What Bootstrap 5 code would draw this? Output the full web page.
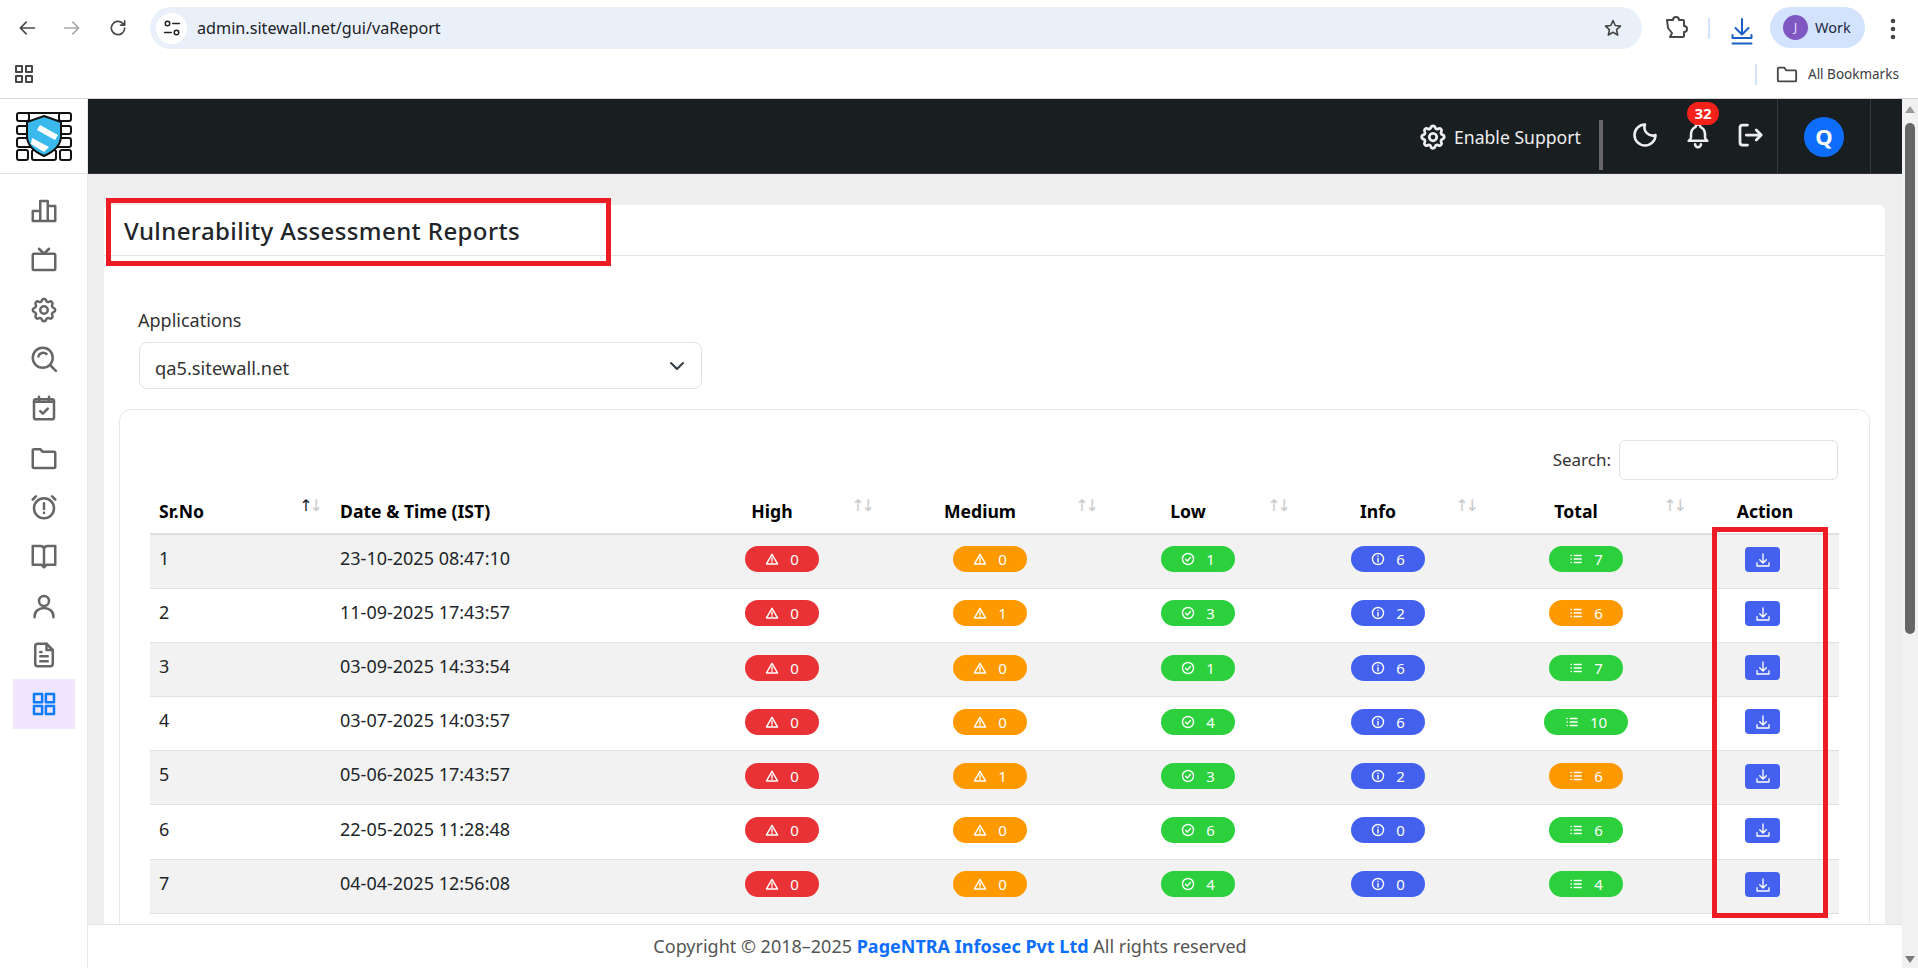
<!DOCTYPE html>
<html lang="en">
<head>
<meta charset="utf-8">
<title>Vulnerability Assessment Reports</title>
<link href="https://cdn.jsdelivr.net/npm/bootstrap@5.3.0/dist/css/bootstrap.min.css" rel="stylesheet">
<script src="https://cdn.jsdelivr.net/npm/bootstrap@5.3.0/dist/js/bootstrap.bundle.min.js"></script>
<style>
html,body{height:968px;overflow:hidden}
body{font-family:"Noto Sans","Open Sans",sans-serif;font-size:15px;color:#212529;background:#fff;position:relative}
.ico{fill:none;stroke:currentColor;stroke-width:2;stroke-linecap:round;stroke-linejoin:round;flex:none}
.addr{position:absolute;left:150px;top:7px;width:1492px;height:42px;border-radius:21px;background:#eaf0fa;display:flex;align-items:center}
.bar-ico{position:absolute;color:#474747}
.tune{width:31px;height:31px;border-radius:50%;background:#fff;margin-left:6px;display:flex;align-items:center;justify-content:center;color:#222}
.url{font-family:"Noto Sans",sans-serif;font-size:16.2px;color:#202124;margin-left:10px;padding-top:1px}
.chrome{height:99px;border-bottom:1px solid #d4d4d4;position:relative;background:#fff}
.sepv{position:absolute;width:2px;background:#d3e3fd}
.work{position:absolute;left:1770px;top:7px;width:95px;height:41px;border-radius:21px;background:#d3e3fd;display:flex;align-items:center;font-size:14.5px;color:#1b2a41}
.work i{width:25px;height:25px;margin-left:13px;margin-right:7px;border-radius:50%;background:#7e57c2;color:#e8def8;font-style:normal;font-size:13px;display:flex;align-items:center;justify-content:center}
.allb{position:absolute;left:1808px;top:64px;font-size:13.5px;color:#3c4043;line-height:20px}
.app{height:869px}
.side{width:88px;flex:none;background:#fff;border-right:1px solid #e9e9e9}
.logo-box{height:75px;border-bottom:1px solid #dfe1e3;padding:13px 0 0 16px}
.nav-ico{width:62px;height:49.3px;margin-left:13px;color:#666;display:flex;align-items:center;justify-content:center}
.nav-ico.on{background:#efe6fd;color:#0d7bff}
.side-list{padding-top:12.500px}
.topnav{height:75px;background:#191e21;flex:none;color:#eee;border-bottom:1px solid #30353a;position:relative}
.topnav .ico{stroke-width:2.2}
.sup{position:absolute;left:1330px;top:23px;display:flex;align-items:center;gap:6px;font-size:17.6px;line-height:30px}
.tbar{position:absolute;left:1511px;top:21px;width:4px;height:50px;background:#666}
.tvl{position:absolute;top:0;bottom:0;width:1px;background:#363b40}
.tnico{position:absolute;color:#eee}
.notif{position:absolute;left:1599px;top:3px;min-width:32px;height:23px;border-radius:12px;background:#f5221b;color:#fff;font-size:15px;font-weight:700;display:flex;align-items:center;justify-content:center}
.ava{position:absolute;left:1716px;top:18px;width:40px;height:40px;border-radius:50%;background:#0d6efd;color:#fff;font-weight:700;font-size:22px;line-height:38px;padding-bottom:2px;display:flex;align-items:center;justify-content:center}
.mainbg{background:#eee;flex:1 1 0;min-height:0;overflow:hidden;padding:31px 17px 0 16px}
.outer{border:0;border-radius:10px 10px 0 0;background:#fff}
.outer>.card-header{height:51px;background:#fff;border-bottom:1px solid #e3e3e3;padding:2px 20px 0;display:flex;align-items:center;font-size:24px;letter-spacing:.4px;font-weight:500;color:#212529}
.outer>.card-body{padding:15px 15px 0}
.lbl{margin:0 0 10px 19px;font-size:18px;line-height:24px;color:#333;padding-top:37px}
.sel{width:563px;margin-left:20px;height:47px;border-radius:8px;font-size:18.3px;padding:8px 36px 4px 15px;color:#333;border-color:#e2e2e6;background-position:right 14px center;background-size:20px 16px}
.inner{margin-top:20px;border:1px solid #e8e8ec;border-radius:12px;background:#fff;padding:30px 31px 60px 30px;--bs-card-border-color:#e8e8ec}
.srch{height:40px;margin-bottom:0;font-size:17px;color:#333}
.srch input{width:219px;height:40px;border-radius:6px;border-color:#e2e2e6;margin-left:8px}
.rep{table-layout:fixed;width:1689px;margin:14px 0 0;font-size:18px;color:#212529;--bs-table-striped-bg:#f2f2f2;--bs-table-border-color:#dfe0e6}
.rep th{height:40px;padding:0 9px 11px;font-size:17.600px;font-weight:700;color:#000;position:relative;border-bottom:2px solid #dfe0e6;vertical-align:bottom;line-height:22px}
.rep th.ctr{text-align:center;padding-right:28px;padding-left:8px}
.rep th.act{text-align:center;padding-right:8px}
.rep td{height:54.2px;padding:0 9px 6px;vertical-align:middle;box-shadow:none}
.rep td.actc{padding-right:13px}
.rep tbody tr:nth-of-type(odd)>*{background:#f2f2f2;--bs-table-accent-bg:#f2f2f2}
.sort{position:absolute;right:6px;top:2px;font:16px/20px "DejaVu Sans",sans-serif;color:#c8c8c8;letter-spacing:-3px;font-weight:400}
.sort.first{right:11px}
.sort b{font-weight:400;color:#1c2833}
.pilly{display:inline-flex;align-items:center;gap:11px;height:26px;padding:0 20.500px;border-radius:13px;color:#fff;font-size:15px;line-height:26px;font-weight:400;vertical-align:middle}
.pilly .ico{stroke-width:2.4}
.c-r{background:#e93235}.c-o{background:#ff9900}.c-g{background:#2bd03c}.c-b{background:#4361ee}
.dlb{display:inline-flex;align-items:center;justify-content:center;width:35px;height:25px;padding:0;border:0;border-radius:4px;background:#4361ee;color:#fff;vertical-align:middle}
.foot{height:44px;flex:none;background:#fff;border-top:1px solid #e3e3e3;text-align:center;font-size:18px;line-height:42px;color:#555;padding-right:90px}
.foot b{color:#0d6efd;font-weight:700}
.sb{width:16px;flex:none;background:#f1f1f1;position:relative}
.thumb{position:absolute;left:3px;top:24px;width:10px;height:511px;background:#666;border-radius:5px}
.arr-u,.arr-d{position:absolute;left:3px;width:0;height:0;border-left:5px solid transparent;border-right:5px solid transparent}
.arr-u{top:7px;border-bottom:7px solid #9a9a9a}
.arr-d{bottom:5px;border-top:7px solid #7a7a7a}
.annot{position:absolute;border:5px solid #ed1c24;pointer-events:none;z-index:5}
.an1{left:106px;top:198px;width:505px;height:68px}
.an2{left:1712px;top:527px;width:116px;height:391px}
</style>
</head>
<body>
<svg width="0" height="0" class="d-none">
<defs>
<symbol id="i-warn" viewBox="0 0 24 24"><path d="M12 4 2.500 20.500h19z"/><path d="M12 10v5M12 17.600v.2"/></symbol>
<symbol id="i-ok" viewBox="0 0 24 24"><circle cx="12" cy="12" r="9.500"/><path d="m7.800 12.300 3 3 5.400-6"/></symbol>
<symbol id="i-inf" viewBox="0 0 24 24"><circle cx="12" cy="12" r="9.500"/><path d="M12 11v6M12 7.400v.2"/></symbol>
<symbol id="i-lst" viewBox="0 0 24 24"><path d="M9 6h12M9 12h12M9 18h12M3.500 6h.5M3.500 12h.5M3.500 18h.5"/></symbol>
<symbol id="i-dl" viewBox="0 0 24 24"><path d="M12 3v13M7 11.500l5 5 5-5M3 16v5h18v-5"/></symbol>
</defs>
</svg>

<div class="chrome">
  <svg class="ico bar-ico" style="left:17px;top:18px" width="20" height="20" viewBox="0 0 24 24"><path d="M21 12H4M11 5l-7 7 7 7"/></svg>
  <svg class="ico bar-ico" style="left:62px;top:18px;color:#a8a8a8" width="20" height="20" viewBox="0 0 24 24"><path d="M3 12h17M13 5l7 7-7 7"/></svg>
  <svg class="ico bar-ico" style="left:108px;top:18px" width="20" height="20" viewBox="0 0 24 24"><path d="M20 12a8 8 0 1 1-2.500-5.800L20 8.500M20 3.500v5h-5"/></svg>
  <div class="addr">
    <div class="tune"><svg class="ico" width="18" height="18" viewBox="0 0 24 24"><circle cx="6" cy="6" r="3"/><path d="M13 6h9M2 18h9"/><circle cx="18" cy="18" r="3"/></svg></div>
    <span class="url">admin.sitewall.net/gui/vaReport</span>
  </div>
  <svg class="ico bar-ico" style="left:1603px;top:18px" width="20" height="20" viewBox="0 0 24 24"><path d="m12 3 2.700 6 6.300.7-4.700 4.300 1.300 6.500L12 17.200 6.400 20.500 7.700 14 3 9.700 9.300 9z"/></svg>
  <svg class="ico bar-ico" style="left:1664px;top:16px" width="24" height="24" viewBox="0 0 24 24"><path d="M3 4h6a3 3 0 0 1 6 0h4a1 1 0 0 1 1 1v5a3 3 0 0 1 0 6v4a1 1 0 0 1-1 1H6l2-4-4-5-1-8z"/></svg>
  <div class="sepv" style="left:1708px;top:18px;height:21px"></div>
  <svg class="ico bar-ico" style="left:1730px;top:16px;color:#1a5fc4" width="24" height="30" viewBox="0 0 24 30"><path d="M12 3v15M5.500 12l6.500 6.500 6.500-6.500M2.500 19v3h19v-3M2.500 27.500h19"/></svg>
  <div class="work"><i>J</i>Work</div>
  <svg class="bar-ico" style="left:1890px;top:18px" width="6" height="22" viewBox="0 0 6 22"><circle cx="3" cy="3" r="2.300" fill="#474747"/><circle cx="3" cy="11" r="2.300" fill="#474747"/><circle cx="3" cy="19" r="2.300" fill="#474747"/></svg>
  <svg class="ico bar-ico" style="left:15px;top:65px" width="18" height="18" viewBox="0 0 18 18"><rect x="1" y="1" width="6" height="6"/><rect x="11" y="1" width="6" height="6"/><rect x="1" y="11" width="6" height="6"/><rect x="11" y="11" width="6" height="6"/></svg>
  <div class="sepv" style="left:1755px;top:64px;height:21px"></div>
  <svg class="ico bar-ico" style="left:1776px;top:63px" width="22" height="22" viewBox="0 0 24 24"><path d="M2 6a1 1 0 0 1 1-1h6l2 3h10a1 1 0 0 1 1 1v10a1 1 0 0 1-1 1H3a1 1 0 0 1-1-1z"/></svg>
  <div class="allb">All Bookmarks</div>
</div>

<div class="app d-flex">
  <aside class="side d-flex flex-column">
    <div class="logo-box">
      <svg width="56" height="49" viewBox="0 0 56 49">
        <g fill="#fff" stroke="#111" stroke-width="2">
          <rect x="8" y="1" width="40" height="8" rx="2"/>
          <rect x="1" y="1" width="12" height="8" rx="2"/><rect x="43" y="1" width="12" height="8" rx="2"/>
          <rect x="1" y="14" width="54" height="8" rx="2"/><rect x="1" y="26" width="54" height="9" rx="2"/>
          <rect x="1" y="38" width="11" height="10" rx="2"/><rect x="16" y="38" width="24" height="10" rx="2"/><rect x="44" y="38" width="11" height="10" rx="2"/>
        </g>
        <path d="M28 4 45 10v14c0 9-8 16-17 20-9-4-17-11-17-20V10z" fill="#39b9ec" stroke="#111" stroke-width="2"/>
        <path d="M24 13 42 23 39 28 21 18zM16 26 33 35 28 40 15 32z" fill="#fff"/>
      </svg>
    </div>
    <div class="side-list">
      <div class="nav-ico"><svg class="ico" width="30" height="30" viewBox="0 0 24 24"><path d="M3 12h6v8H3zM9 4h6v16H9zM15 8h6v12h-6z"/></svg></div>
      <div class="nav-ico"><svg class="ico" width="30" height="30" viewBox="0 0 24 24"><rect x="3" y="7" width="18" height="13" rx="1"/><path d="m16 3-4 4-4-4"/></svg></div>
      <div class="nav-ico"><svg class="ico" width="30" height="30" viewBox="0 0 24 24"><path d="M10.325 4.317c.426-1.756 2.924-1.756 3.350 0a1.724 1.724 0 0 0 2.573 1.066c1.543-.94 3.310.826 2.370 2.370a1.724 1.724 0 0 0 1.065 2.572c1.756.426 1.756 2.924 0 3.350a1.724 1.724 0 0 0-1.066 2.573c.94 1.543-.826 3.310-2.370 2.370a1.724 1.724 0 0 0-2.572 1.065c-.426 1.756-2.924 1.756-3.350 0a1.724 1.724 0 0 0-2.573-1.066c-1.543.94-3.310-.826-2.370-2.370a1.724 1.724 0 0 0-1.065-2.572c-1.756-.426-1.756-2.924 0-3.350a1.724 1.724 0 0 0 1.066-2.573c-.94-1.543.826-3.310 2.370-2.370 1 .608 2.296.07 2.572-1.065z"/><circle cx="12" cy="12" r="3"/></svg></div>
      <div class="nav-ico"><svg class="ico" width="30" height="30" viewBox="0 0 24 24"><circle cx="11" cy="11" r="8"/><path d="m17 17 4.500 4.500M7.500 10a4 4 0 0 1 6.500-2"/></svg></div>
      <div class="nav-ico"><svg class="ico" width="30" height="30" viewBox="0 0 24 24"><rect x="4" y="5" width="16" height="16" rx="1.500"/><path d="M8 3v3M16 3v3M4 7h16M9 14.500l2 2 4-4"/></svg></div>
      <div class="nav-ico"><svg class="ico" width="30" height="30" viewBox="0 0 24 24"><path d="M3 6a1 1 0 0 1 1-1h5l2 2h9a1 1 0 0 1 1 1v11a1 1 0 0 1-1 1H4a1 1 0 0 1-1-1z"/></svg></div>
      <div class="nav-ico"><svg class="ico" width="30" height="30" viewBox="0 0 24 24"><circle cx="12" cy="13" r="8"/><path d="M12 9v4.500M12 16.500v.2M3 6l2.500-2.500M21 6l-2.500-2.500"/></svg></div>
      <div class="nav-ico"><svg class="ico" width="30" height="30" viewBox="0 0 24 24"><path d="M3 4h6a3 3 0 0 1 3 2 3 3 0 0 1 3-2h6v15h-7l-2 2-2-2H3zM12 6v14"/></svg></div>
      <div class="nav-ico"><svg class="ico" width="30" height="30" viewBox="0 0 24 24"><circle cx="12" cy="8" r="4"/><path d="M4.500 21v-1a7.500 6.500 0 0 1 15 0v1"/></svg></div>
      <div class="nav-ico"><svg class="ico" width="30" height="30" viewBox="0 0 24 24"><path d="M14 3H7a2 2 0 0 0-2 2v14a2 2 0 0 0 2 2h10a2 2 0 0 0 2-2V8z"/><path d="M14 3v5h5M9 9.500h1M9 13h6M9 17h6"/></svg></div>
      <div class="nav-ico on"><svg class="ico" width="30" height="30" viewBox="0 0 24 24"><rect x="4" y="4" width="6.500" height="6.500"/><rect x="13.500" y="4" width="6.500" height="6.500"/><rect x="4" y="13.500" width="6.500" height="6.500"/><rect x="13.500" y="13.500" width="6.500" height="6.500"/></svg></div>
    </div>
  </aside>

  <div class="d-flex flex-column flex-grow-1" style="min-width:0">
    <nav class="topnav navbar p-0">
      <div class="sup">
        <svg class="ico" width="30" height="30" viewBox="0 0 24 24"><path d="M10.325 4.317c.426-1.756 2.924-1.756 3.350 0a1.724 1.724 0 0 0 2.573 1.066c1.543-.94 3.310.826 2.370 2.370a1.724 1.724 0 0 0 1.065 2.572c1.756.426 1.756 2.924 0 3.350a1.724 1.724 0 0 0-1.066 2.573c.94 1.543-.826 3.310-2.370 2.370a1.724 1.724 0 0 0-2.572 1.065c-.426 1.756-2.924 1.756-3.350 0a1.724 1.724 0 0 0-2.573-1.066c-1.543.94-3.310-.826-2.370-2.370a1.724 1.724 0 0 0-1.065-2.572c-1.756-.426-1.756-2.924 0-3.350a1.724 1.724 0 0 0 1.066-2.573c-.94-1.543.826-3.310 2.370-2.370 1 .608 2.296.07 2.572-1.065z"/><circle cx="12" cy="12" r="3"/></svg>
        <span>Enable Support</span>
      </div>
      <div class="tbar"></div>
      <svg class="ico tnico" style="left:1543px;top:22px" width="28" height="28" viewBox="0 0 24 24"><path d="M12 3a7 7 0 0 0 9 9 9 9 0 1 1-9-9z"/></svg>
      <svg class="ico tnico" style="left:1596px;top:22px" width="28" height="28" viewBox="0 0 24 24"><path d="M10 5a2 2 0 1 1 4 0 7 7 0 0 1 4 6v3a4 4 0 0 0 2 3H4a4 4 0 0 0 2-3v-3a7 7 0 0 1 4-6M9.500 20a2.500 2.500 0 0 0 5 0"/></svg>
      <div class="notif">32</div>
      <svg class="ico tnico" style="left:1647px;top:21px" width="30" height="30" viewBox="0 0 24 24"><path d="M10 4H6a2 2 0 0 0-2 2v12a2 2 0 0 0 2 2h4M9 12h12M17 8l4 4-4 4"/></svg>
      <div class="tvl" style="left:1689px"></div>
      <div class="ava">Q</div>
      <div class="tvl" style="left:1782px"></div>
    </nav>

    <main class="mainbg">
      <div class="card outer">
        <div class="card-header rounded-top">Vulnerability Assessment Reports</div>
        <div class="card-body">
          <label class="lbl d-block" for="appsel">Applications</label>
          <select id="appsel" class="form-select sel"><option>qa5.sitewall.net</option></select>
          <div class="inner">
            <div class="srch d-flex justify-content-end align-items-center"><label for="q">Search:</label><input id="q" class="form-control" type="search"></div>
            <table class="table table-striped rep">
              <colgroup><col style="width:181px"><col style="width:355px"><col style="width:192px"><col style="width:224px"><col style="width:192px"><col style="width:188px"><col style="width:208px"><col style="width:149px"></colgroup>
              <thead><tr>
                <th>Sr.No<span class="sort first"><b>↑</b>↓</span></th>
                <th>Date &amp; Time (IST)</th>
                <th class="ctr">High<span class="sort">↑↓</span></th>
                <th class="ctr">Medium<span class="sort">↑↓</span></th>
                <th class="ctr">Low<span class="sort">↑↓</span></th>
                <th class="ctr">Info<span class="sort">↑↓</span></th>
                <th class="ctr">Total<span class="sort">↑↓</span></th>
                <th class="act">Action</th>
              </tr></thead>
              <tbody class="text-center">
                <tr><td class="text-start">1</td><td class="text-start">23-10-2025 08:47:10</td><td><span class="pilly c-r"><svg class="ico" width="14" height="14"><use href="#i-warn"/></svg>0</span></td><td><span class="pilly c-o"><svg class="ico" width="14" height="14"><use href="#i-warn"/></svg>0</span></td><td><span class="pilly c-g"><svg class="ico" width="14" height="14"><use href="#i-ok"/></svg>1</span></td><td><span class="pilly c-b"><svg class="ico" width="14" height="14"><use href="#i-inf"/></svg>6</span></td><td><span class="pilly c-g"><svg class="ico" width="14" height="14"><use href="#i-lst"/></svg>7</span></td><td class="actc"><button class="btn dlb"><svg class="ico" width="16" height="16"><use href="#i-dl"/></svg></button></td></tr>
                <tr><td class="text-start">2</td><td class="text-start">11-09-2025 17:43:57</td><td><span class="pilly c-r"><svg class="ico" width="14" height="14"><use href="#i-warn"/></svg>0</span></td><td><span class="pilly c-o"><svg class="ico" width="14" height="14"><use href="#i-warn"/></svg>1</span></td><td><span class="pilly c-g"><svg class="ico" width="14" height="14"><use href="#i-ok"/></svg>3</span></td><td><span class="pilly c-b"><svg class="ico" width="14" height="14"><use href="#i-inf"/></svg>2</span></td><td><span class="pilly c-o"><svg class="ico" width="14" height="14"><use href="#i-lst"/></svg>6</span></td><td class="actc"><button class="btn dlb"><svg class="ico" width="16" height="16"><use href="#i-dl"/></svg></button></td></tr>
                <tr><td class="text-start">3</td><td class="text-start">03-09-2025 14:33:54</td><td><span class="pilly c-r"><svg class="ico" width="14" height="14"><use href="#i-warn"/></svg>0</span></td><td><span class="pilly c-o"><svg class="ico" width="14" height="14"><use href="#i-warn"/></svg>0</span></td><td><span class="pilly c-g"><svg class="ico" width="14" height="14"><use href="#i-ok"/></svg>1</span></td><td><span class="pilly c-b"><svg class="ico" width="14" height="14"><use href="#i-inf"/></svg>6</span></td><td><span class="pilly c-g"><svg class="ico" width="14" height="14"><use href="#i-lst"/></svg>7</span></td><td class="actc"><button class="btn dlb"><svg class="ico" width="16" height="16"><use href="#i-dl"/></svg></button></td></tr>
                <tr><td class="text-start">4</td><td class="text-start">03-07-2025 14:03:57</td><td><span class="pilly c-r"><svg class="ico" width="14" height="14"><use href="#i-warn"/></svg>0</span></td><td><span class="pilly c-o"><svg class="ico" width="14" height="14"><use href="#i-warn"/></svg>0</span></td><td><span class="pilly c-g"><svg class="ico" width="14" height="14"><use href="#i-ok"/></svg>4</span></td><td><span class="pilly c-b"><svg class="ico" width="14" height="14"><use href="#i-inf"/></svg>6</span></td><td><span class="pilly c-g"><svg class="ico" width="14" height="14"><use href="#i-lst"/></svg>10</span></td><td class="actc"><button class="btn dlb"><svg class="ico" width="16" height="16"><use href="#i-dl"/></svg></button></td></tr>
                <tr><td class="text-start">5</td><td class="text-start">05-06-2025 17:43:57</td><td><span class="pilly c-r"><svg class="ico" width="14" height="14"><use href="#i-warn"/></svg>0</span></td><td><span class="pilly c-o"><svg class="ico" width="14" height="14"><use href="#i-warn"/></svg>1</span></td><td><span class="pilly c-g"><svg class="ico" width="14" height="14"><use href="#i-ok"/></svg>3</span></td><td><span class="pilly c-b"><svg class="ico" width="14" height="14"><use href="#i-inf"/></svg>2</span></td><td><span class="pilly c-o"><svg class="ico" width="14" height="14"><use href="#i-lst"/></svg>6</span></td><td class="actc"><button class="btn dlb"><svg class="ico" width="16" height="16"><use href="#i-dl"/></svg></button></td></tr>
                <tr><td class="text-start">6</td><td class="text-start">22-05-2025 11:28:48</td><td><span class="pilly c-r"><svg class="ico" width="14" height="14"><use href="#i-warn"/></svg>0</span></td><td><span class="pilly c-o"><svg class="ico" width="14" height="14"><use href="#i-warn"/></svg>0</span></td><td><span class="pilly c-g"><svg class="ico" width="14" height="14"><use href="#i-ok"/></svg>6</span></td><td><span class="pilly c-b"><svg class="ico" width="14" height="14"><use href="#i-inf"/></svg>0</span></td><td><span class="pilly c-g"><svg class="ico" width="14" height="14"><use href="#i-lst"/></svg>6</span></td><td class="actc"><button class="btn dlb"><svg class="ico" width="16" height="16"><use href="#i-dl"/></svg></button></td></tr>
                <tr><td class="text-start">7</td><td class="text-start">04-04-2025 12:56:08</td><td><span class="pilly c-r"><svg class="ico" width="14" height="14"><use href="#i-warn"/></svg>0</span></td><td><span class="pilly c-o"><svg class="ico" width="14" height="14"><use href="#i-warn"/></svg>0</span></td><td><span class="pilly c-g"><svg class="ico" width="14" height="14"><use href="#i-ok"/></svg>4</span></td><td><span class="pilly c-b"><svg class="ico" width="14" height="14"><use href="#i-inf"/></svg>0</span></td><td><span class="pilly c-g"><svg class="ico" width="14" height="14"><use href="#i-lst"/></svg>4</span></td><td class="actc"><button class="btn dlb"><svg class="ico" width="16" height="16"><use href="#i-dl"/></svg></button></td></tr>
              </tbody>
            </table>
          </div>
        </div>
      </div>
    </main>

    <footer class="foot">Copyright © 2018–2025 <b>PageNTRA Infosec Pvt Ltd</b> All rights reserved</footer>
  </div>

  <div class="sb"><span class="arr-u"></span><span class="thumb"></span><span class="arr-d"></span></div>
</div>

<div class="annot an1"></div>
<div class="annot an2"></div>
</body>
</html>
